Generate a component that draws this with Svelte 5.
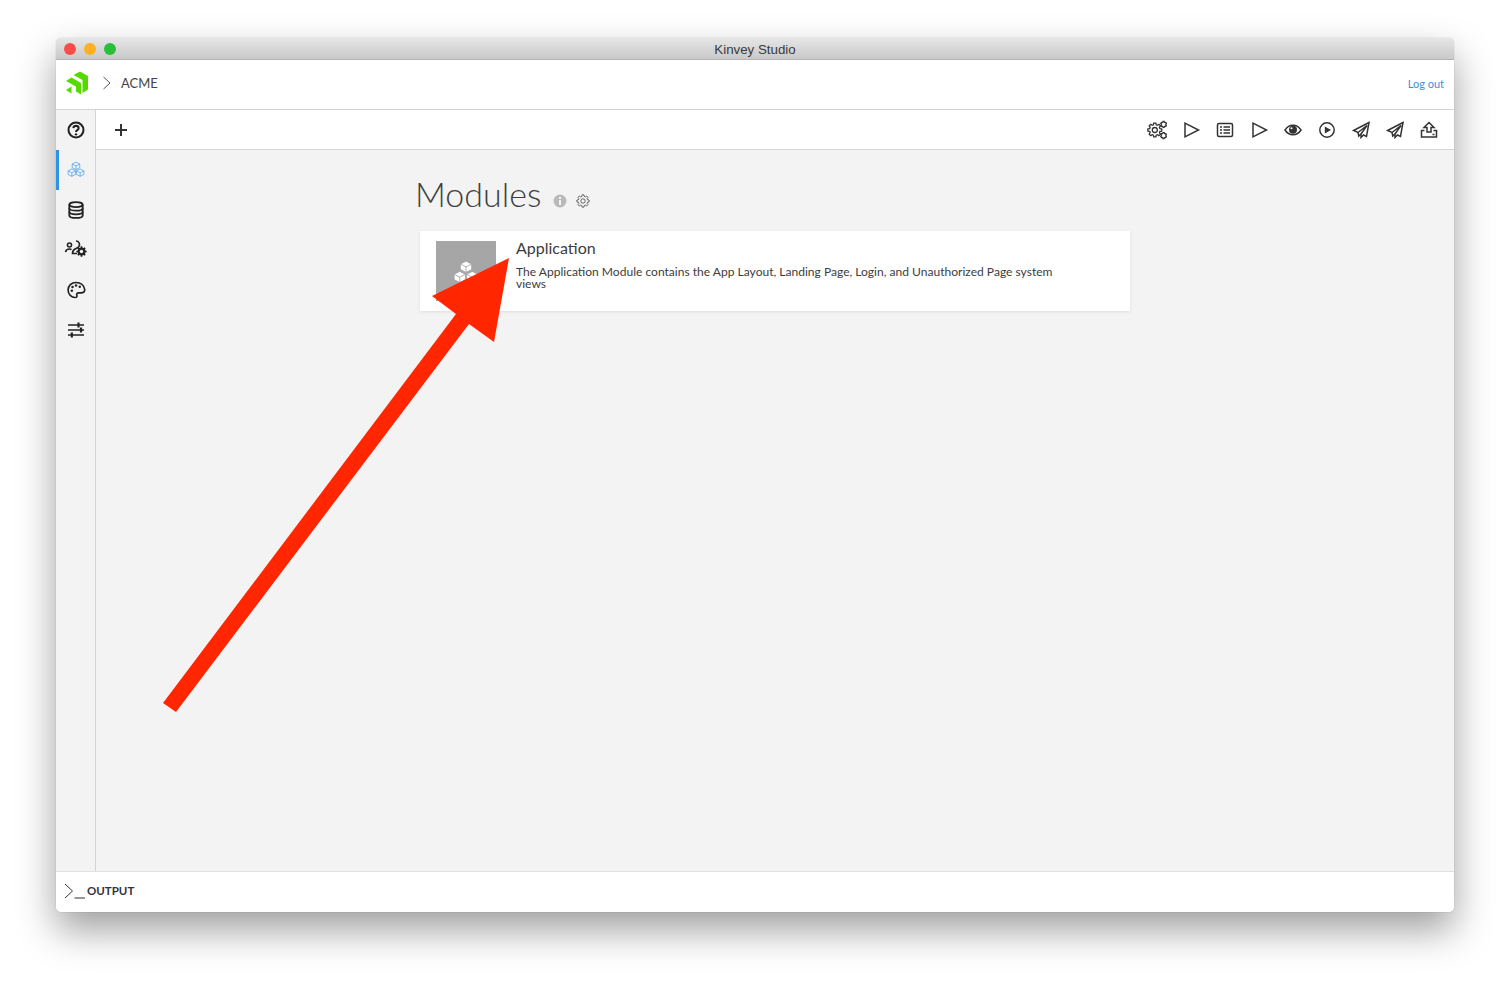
<script lang="ts">
  const toolbarIcons = ['gears', 'play', 'list', 'play', 'eye', 'playCircle', 'send', 'send', 'upload']
  const sideIcons = [
    { name: 'modules', size: 20 },
    { name: 'database', size: 20 },
    { name: 'users', size: 24 },
    { name: 'palette', size: 20 },
    { name: 'sliders', size: 20 }
  ]

  // outline of a toothed wheel, used by every gear icon
  function gearPath(cx: number, cy: number, r: number, teeth = 8): string {
    const inner = r * 0.76
    const step = (Math.PI * 2) / teeth
    const pts: string[] = []
    for (let i = 0; i < teeth; i++) {
      const a = i * step - Math.PI / 2
      const corners: [number, number][] = [
        [inner, a - step * 0.34],
        [r, a - step * 0.2],
        [r, a + step * 0.2],
        [inner, a + step * 0.34]
      ]
      for (const [d, t] of corners) {
        pts.push(`${(cx + d * Math.cos(t)).toFixed(2)} ${(cy + d * Math.sin(t)).toFixed(2)}`)
      }
    }
    return `M${pts.join('L')}z`
  }
</script>

{#snippet cubes()}
  <path d="M12 2.500l4.500 2.300v4.400L12 11.500 7.500 9.200V4.800z" />
  <path d="M7.500 4.800l4.500 2.300 4.500-2.300M12 7.100v4.400" />
  <path d="M7 10.700l4.500 2.300v4.300L7 19.600l-4.500-2.300V13z" />
  <path d="M2.500 13L7 15.300 11.500 13M7 15.300v4.300" />
  <path d="M17 10.700l4.500 2.300v4.300L17 19.600l-4.500-2.300V13z" />
  <path d="M12.500 13l4.500 2.300L21.500 13M17 15.300v4.300" />
{/snippet}

{#snippet toolIcon(name: string)}
  <svg class="icon" viewBox="0 0 20 20" width="20" height="20" aria-hidden="true">
    {#if name === 'gears'}
      <path d={gearPath(7.8, 10, 7)} stroke-width="1.300" />
      <circle cx="7.800" cy="10" r="2.500" stroke-width="1.300" />
      <path d={gearPath(16.6, 4.400, 3, 6)} stroke-width="1.200" />
      <path d={gearPath(16.6, 15.600, 3, 6)} stroke-width="1.200" />
    {:else if name === 'play'}
      <path d="M4 3.200L17.500 10 4 16.800z" />
    {:else if name === 'list'}
      <rect x="2.500" y="3.500" width="15" height="13" rx="1.500" />
      <path d="M5 7h2M8.500 7h6.500M5 10h2M8.500 10h6.500M5 13h2M8.500 13h6.500" stroke-width="1.400" />
    {:else if name === 'eye'}
      <path d="M2 10c2-3.200 4.800-4.800 8-4.800s6 1.600 8 4.800c-2 3.200-4.800 4.800-8 4.800S4 13.200 2 10z" />
      <circle class="solid" cx="10" cy="9.800" r="4" />
      <circle class="cut" cx="8.500" cy="8.300" r="1" />
    {:else if name === 'playCircle'}
      <circle cx="10" cy="10" r="7.200" />
      <path class="solid" d="M7.800 6.500L14 10l-6.200 3.500z" />
    {:else if name === 'send'}
      <path d="M18 2.500L2.500 10.500l4.500 2 9-7-6 8.500v3.500l2.500-2.500 3 1.500z" />
      <path d="M7 12.500l.8 3.500 2.200-2" />
    {:else if name === 'upload'}
      <path d="M10 2.500l5 5h-3v4.500H8V7.500H5z" />
      <path d="M5.500 10.500H2.500v6.500h15v-6.500h-3" />
      <path d="M13.500 14.500h2" />
    {/if}
  </svg>
{/snippet}

{#snippet sideIcon(name: string, size: number)}
  <svg class="icon" viewBox="0 0 24 24" width={size} height={size} aria-hidden="true">
    {#if name === 'modules'}
      {@render cubes()}
    {:else if name === 'database'}
      <g stroke-width="2.200">
        <ellipse cx="12" cy="5.500" rx="8" ry="3" />
        <path d="M4 5.500v13c0 1.700 3.600 3 8 3s8-1.300 8-3v-13" />
        <path d="M4 9.800c0 1.700 3.600 3 8 3s8-1.300 8-3M4 14.200c0 1.700 3.600 3 8 3s8-1.300 8-3" />
      </g>
    {:else if name === 'users'}
      <g stroke-width="1.600">
        <circle cx="5.500" cy="7" r="2" />
        <path d="M1.500 14c.4-2 1.800-3 4-3 .8 0 1.500.2 2 .6" />
        <path d="M12 3a3.500 3.500 0 0 1 3 5.300c-.7 1.300-2 1.600-3.200 2.200-2 .9-3.300 2.100-3.300 5H13" />
      </g>
      <path class="solid" d={gearPath(17.5, 13.500, 5.200)} />
      <circle class="hole" cx="17.500" cy="13.500" r="1.700" />
    {:else if name === 'palette'}
      <g stroke-width="2">
        <path d="M12 3c-5.500 0-9.500 4-9.500 9s4 9 8.500 9c2 0 2.500-1.200 2-2.500-.6-1.500.2-3 2-3h3c2.200 0 4.500-1 4.500-4C21.500 6.500 17.500 3 12 3z" />
      </g>
      <circle class="solid" cx="7" cy="13" r="1.500" />
      <circle class="solid" cx="7.800" cy="8.500" r="1.500" />
      <circle class="solid" cx="12" cy="6.500" r="1.500" />
      <circle class="solid" cx="16.500" cy="8" r="1.500" />
    {:else if name === 'sliders'}
      <path d="M2.400 6h19.200M2.400 12h19.200M2.400 18h19.200" stroke-width="2" />
      <path d="M15 3v6M18 9v6M7 15v6" stroke-width="2.600" />
    {/if}
  </svg>
{/snippet}

<div class="page">
  <div class="window">
    <div class="titlebar">
      <div class="lights">
        <span class="light red"></span>
        <span class="light yellow"></span>
        <span class="light green"></span>
      </div>
      <span class="title">Kinvey Studio</span>
    </div>

    <header class="topbar">
      <svg class="logo" viewBox="0 0 24 24" width="24" height="24" aria-hidden="true">
        <path d="M8.500 4L15 .5 23 5v13.500L17.500 22V8.900z" />
        <path d="M1 10l5.500-3.500L16 12v11.500l-5-3V15.500z" />
        <path d="M1 19l5.500-3.500v7z" />
      </svg>
      <svg class="crumb" viewBox="0 0 10 14" width="10" height="14" aria-hidden="true">
        <path d="M1.500 1L8 7l-6.500 6" />
      </svg>
      <span class="app-name">ACME</span>
      <a class="logout" href="#logout">Log out</a>
    </header>

    <div class="body">
      <nav class="sidebar">
        <div class="side-item">
          <svg class="icon" viewBox="0 0 24 24" width="18" height="18" aria-hidden="true">
            <g stroke-width="2.700">
              <circle cx="12" cy="12" r="10" />
              <path d="M8.500 9.500C8.700 7.500 10 6.500 12 6.500c2.200 0 3.500 1.300 3.500 3 0 2.700-3.500 2.700-3.500 5" />
            </g>
            <circle class="solid" cx="12" cy="17.800" r="1.600" />
          </svg>
        </div>
        {#each sideIcons as item}
          <div class="side-item" class:active={item.name === 'modules'}>
            {@render sideIcon(item.name, item.size)}
          </div>
        {/each}
      </nav>

      <div class="main">
        <div class="toolbar">
          <svg class="plus" viewBox="0 0 14 14" width="14" height="14" aria-hidden="true">
            <path d="M7 1v12M1 7h12" />
          </svg>
          <div class="tools">
            {#each toolbarIcons as name}
              <span class="tool">{@render toolIcon(name)}</span>
            {/each}
          </div>
        </div>

        <main class="content">
          <div class="heading">
            <h1>Modules</h1>
            <svg class="info" viewBox="0 0 14 14" width="14" height="14" aria-hidden="true">
              <circle cx="7" cy="7" r="6.500" />
              <rect x="6" y="6" width="2" height="5" fill="#f3f3f3" />
              <rect x="6" y="3" width="2" height="2" fill="#f3f3f3" />
            </svg>
            <svg class="icon settings" viewBox="0 0 14 14" width="14" height="14" aria-hidden="true">
              <path d={gearPath(7, 7, 6.200)} />
              <circle cx="7" cy="7" r="2.200" />
            </svg>
          </div>

          <article class="card">
            <div class="thumb">
              <svg viewBox="0 0 24 24" width="30" height="30" aria-hidden="true">
                {@render cubes()}
              </svg>
            </div>
            <div class="card-text">
              <h2>Application</h2>
              <p>The Application Module contains the App Layout, Landing Page, Login, and Unauthorized Page system views</p>
            </div>
          </article>
        </main>
      </div>
    </div>

    <footer class="output">
      <svg class="prompt" viewBox="0 0 22 16" width="22" height="16" aria-hidden="true">
        <path d="M1 1l7.500 7L1 15" />
        <path d="M10.500 15H21" />
      </svg>
      <span class="output-label">OUTPUT</span>
    </footer>
  </div>

  <!-- annotation drawn over the screenshot -->
  <svg class="arrow" viewBox="0 0 1510 986" width="1510" height="986" aria-hidden="true">
    <polygon points="163,703 456,314 432,296 509,258 494,342 469,324 176,712" />
  </svg>
</div>

<style>
  :global(body) {
    margin: 0;
    background: #fff;
  }

  .page {
    position: relative;
    width: 1510px;
    height: 986px;
    padding: 38px 56px 74px;
    box-sizing: border-box;
    overflow: hidden;
    font-family: Lato, 'Open Sans', sans-serif;
    color: #3c3c3c;
  }

  .window {
    display: flex;
    flex-direction: column;
    height: 100%;
    border-radius: 5px;
    overflow: hidden;
    box-shadow:
      0 0 1px rgba(0, 0, 0, 0.35),
      0 18px 38px rgba(0, 0, 0, 0.38);
  }

  .titlebar {
    position: relative;
    display: flex;
    align-items: center;
    justify-content: center;
    flex: none;
    height: 22px;
    background: linear-gradient(#e6e6e6, #c9c9c9);
    border-bottom: 1px solid #b4b4b4;
    box-sizing: border-box;
  }

  .lights {
    position: absolute;
    left: 8px;
    top: 5px;
    display: flex;
    gap: 8px;
  }

  .light {
    width: 12px;
    height: 12px;
    border-radius: 50%;
  }

  .red {
    background: #fc4c4a;
  }

  .yellow {
    background: #fdb024;
  }

  .green {
    background: #2abf3a;
  }

  .title {
    margin-top: 1px;
    font-family: 'Liberation Sans', sans-serif;
    font-size: 13.300px;
    color: #3a3a3a;
  }

  .topbar {
    display: flex;
    align-items: center;
    flex: none;
    height: 50px;
    padding: 0 10px 3px 9px;
    background: #fff;
    border-bottom: 1px solid #d4d4d4;
    box-sizing: border-box;
  }

  .logo {
    fill: #55d900;
  }

  .crumb {
    margin-left: 13px;
    fill: none;
    stroke: #555;
    stroke-width: 1;
  }

  .app-name {
    margin-left: 9px;
    font-size: 13px;
    color: #444;
  }

  .logout {
    margin-left: auto;
    font-size: 11px;
    color: #3a8fdf;
    text-decoration: none;
  }

  .body {
    display: flex;
    flex: 1;
    min-height: 0;
  }

  .sidebar {
    flex: none;
    width: 40px;
    background: #f3f3f3;
    border-right: 1px solid #d4d4d4;
    box-sizing: border-box;
  }

  .side-item {
    display: flex;
    align-items: center;
    justify-content: center;
    height: 40px;
    box-sizing: border-box;
  }

  .side-item.active {
    border-left: 3px solid #2e93e6;
    padding-right: 3px;
    --ink: #5aa8ea;
  }

  .side-item.active .icon {
    stroke-width: 1;
  }

  .icon {
    fill: none;
    stroke: var(--ink, #222);
    stroke-width: 1.500;
  }

  .icon .solid {
    fill: var(--ink, #222);
    stroke: none;
  }

  .icon .cut {
    fill: #fff;
    stroke: none;
  }

  .icon .hole {
    fill: #f3f3f3;
    stroke: none;
  }

  .main {
    display: flex;
    flex-direction: column;
    flex: 1;
    min-width: 0;
  }

  .toolbar {
    display: flex;
    align-items: center;
    justify-content: space-between;
    flex: none;
    height: 40px;
    padding: 0 15px 0 18px;
    background: #fff;
    border-bottom: 1px solid #d4d4d4;
    box-sizing: border-box;
  }

  .plus {
    fill: none;
    stroke: #333;
    stroke-width: 2;
  }

  .tools {
    display: flex;
    gap: 14px;
    --ink: #333;
  }

  .tool {
    display: flex;
  }

  .content {
    flex: 1;
    padding: 23px 0 0 319px;
    background: #f3f3f3;
  }

  .heading {
    display: flex;
    align-items: center;
    gap: 9px;
    height: 40px;
  }

  .heading h1 {
    margin: 0 3px 0 0;
    font-size: 34px;
    font-weight: 300;
    color: #3f3f3f;
  }

  .info {
    margin-top: 15px;
    fill: #b9b9b9;
  }

  .settings {
    margin-top: 15px;
    --ink: #555;
    stroke-width: 0.900;
  }

  .card {
    display: flex;
    gap: 20px;
    width: 710px;
    height: 80px;
    margin: 18px 0 0 5px;
    padding: 10px 16px;
    background: #fff;
    box-shadow: 0 1px 3px rgba(0, 0, 0, 0.09);
    box-sizing: border-box;
  }

  .thumb {
    display: flex;
    align-items: center;
    justify-content: center;
    flex: none;
    width: 60px;
    height: 60px;
    background: #a6a6a6;
  }

  .thumb svg {
    margin-top: 3px;
    fill: #fff;
    stroke: #a6a6a6;
    stroke-width: 0.700;
  }

  .card-text h2 {
    margin: -2px 0 0;
    font-size: 16px;
    font-weight: 400;
    line-height: 17px;
    color: #3c3c3c;
  }

  .card-text p {
    width: 545px;
    margin: 10px 0 0;
    font-size: 12.050px;
    line-height: 12px;
    color: #3c3c3c;
  }

  .output {
    display: flex;
    align-items: center;
    gap: 1px;
    flex: none;
    height: 41px;
    padding: 0 8px 2px;
    background: #fff;
    border-top: 1px solid #e0e0e0;
    box-sizing: border-box;
    font-size: 11.500px;
    font-weight: 700;
    color: #33333d;
  }

  .output-label {
    margin-top: -2px;
  }

  .prompt {
    fill: none;
    stroke: #333;
    stroke-width: 1;
  }

  .arrow {
    position: absolute;
    left: 0;
    top: 0;
    fill: #ff2600;
    pointer-events: none;
  }
</style>
